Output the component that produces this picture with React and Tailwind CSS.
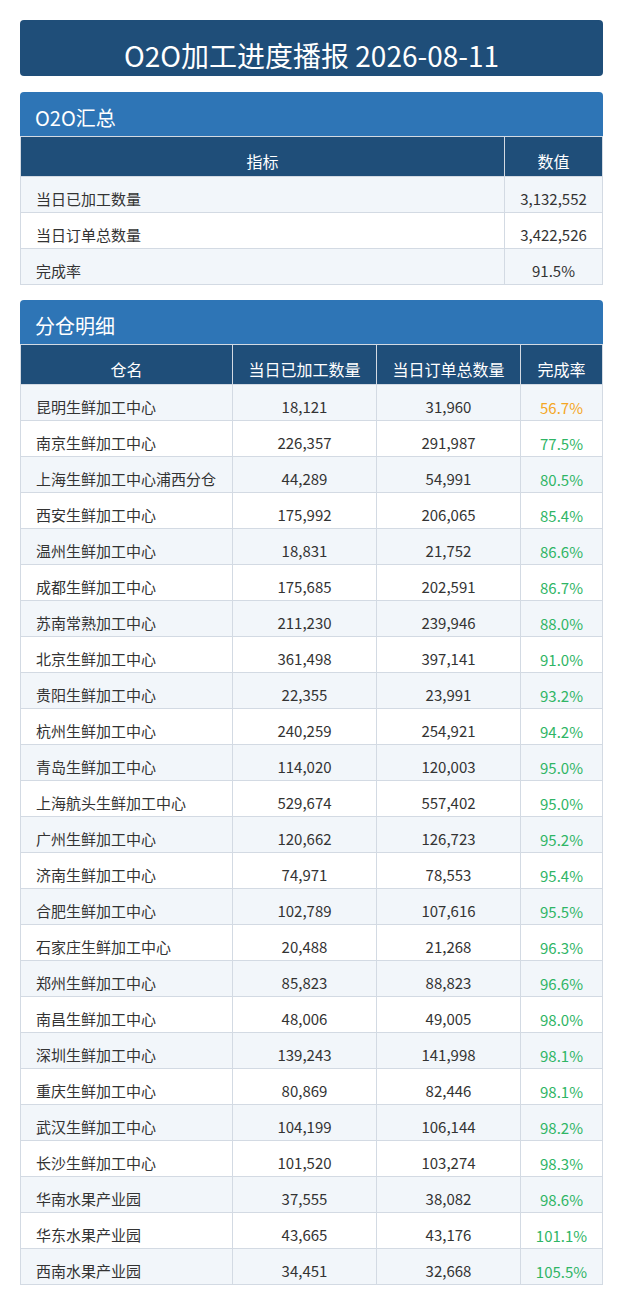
import React from "react";

const summary = [
  { label: "当日已加工数量", value: "3,132,552" },
  { label: "当日订单总数量", value: "3,422,526" },
  { label: "完成率", value: "91.5%" },
];

const rows = [
  ["昆明生鲜加工中心", "18,121", "31,960", "56.7%"],
  ["南京生鲜加工中心", "226,357", "291,987", "77.5%"],
  ["上海生鲜加工中心浦西分仓", "44,289", "54,991", "80.5%"],
  ["西安生鲜加工中心", "175,992", "206,065", "85.4%"],
  ["温州生鲜加工中心", "18,831", "21,752", "86.6%"],
  ["成都生鲜加工中心", "175,685", "202,591", "86.7%"],
  ["苏南常熟加工中心", "211,230", "239,946", "88.0%"],
  ["北京生鲜加工中心", "361,498", "397,141", "91.0%"],
  ["贵阳生鲜加工中心", "22,355", "23,991", "93.2%"],
  ["杭州生鲜加工中心", "240,259", "254,921", "94.2%"],
  ["青岛生鲜加工中心", "114,020", "120,003", "95.0%"],
  ["上海航头生鲜加工中心", "529,674", "557,402", "95.0%"],
  ["广州生鲜加工中心", "120,662", "126,723", "95.2%"],
  ["济南生鲜加工中心", "74,971", "78,553", "95.4%"],
  ["合肥生鲜加工中心", "102,789", "107,616", "95.5%"],
  ["石家庄生鲜加工中心", "20,488", "21,268", "96.3%"],
  ["郑州生鲜加工中心", "85,823", "88,823", "96.6%"],
  ["南昌生鲜加工中心", "48,006", "49,005", "98.0%"],
  ["深圳生鲜加工中心", "139,243", "141,998", "98.1%"],
  ["重庆生鲜加工中心", "80,869", "82,446", "98.1%"],
  ["武汉生鲜加工中心", "104,199", "106,144", "98.2%"],
  ["长沙生鲜加工中心", "101,520", "103,274", "98.3%"],
  ["华南水果产业园", "37,555", "38,082", "98.6%"],
  ["华东水果产业园", "43,665", "43,176", "101.1%"],
  ["西南水果产业园", "34,451", "32,668", "105.5%"],
];

const th =
  "h-[40px] border border-[#d3dae3] bg-[#1f4e79] pt-[8px] text-center text-[16px] font-normal text-white";
const td = "border border-[#d3dae3] pt-[10px] text-[15px]";

const SectionHead = ({ title }) => (
  <div className="h-[44px] rounded-t-[4px] bg-[#2e75b6] px-[15px] pt-[12px] text-[20px] leading-[28px] text-white">
    {title}
  </div>
);

export default function App() {
  return (
    <div className="min-h-[1304px] bg-white px-[20px] pt-[20px] pb-[20px] font-['Noto_Sans_CJK_SC','Noto_Sans',sans-serif] text-[#333333]">
      <div className="flex h-[56px] items-center justify-center rounded-[4px] bg-[#1f4e79] pt-[14px] text-[28px] leading-[36px] text-white">
        O2O加工进度播报 2026-08-11
      </div>

      {/* O2O汇总 */}
      <div className="mt-[16px]">
        <SectionHead title="O2O汇总" />
        <table className="w-full table-fixed border-collapse">
          <colgroup>
            <col className="w-[484px]" />
            <col />
          </colgroup>
          <thead>
            <tr>
              <th className={th}>指标</th>
              <th className={th}>数值</th>
            </tr>
          </thead>
          <tbody>
            {summary.map((r, i) => (
              <tr key={r.label} className={`h-[36px] ${i % 2 === 0 ? "bg-[#f2f6fa]" : "bg-white"}`}>
                <td className={`${td} pl-[15px] text-left text-[#333333]`}>{r.label}</td>
                <td className={`${td} text-center text-[#333333]`}>{r.value}</td>
              </tr>
            ))}
          </tbody>
        </table>
      </div>

      {/* 分仓明细 */}
      <div className="mt-[15px]">
        <SectionHead title="分仓明细" />
        <table className="w-full table-fixed border-collapse">
          <colgroup>
            <col className="w-[212px]" />
            <col className="w-[144px]" />
            <col className="w-[144px]" />
            <col />
          </colgroup>
          <thead>
            <tr>
              <th className={th}>仓名</th>
              <th className={th}>当日已加工数量</th>
              <th className={th}>当日订单总数量</th>
              <th className={th}>完成率</th>
            </tr>
          </thead>
          <tbody>
            {rows.map(([name, done, total, rate], i) => (
              <tr key={name} className={`h-[36px] ${i % 2 === 0 ? "bg-[#f2f6fa]" : "bg-white"}`}>
                <td className={`${td} pl-[15px] text-left text-[#333333]`}>{name}</td>
                <td className={`${td} text-center text-[#333333]`}>{done}</td>
                <td className={`${td} text-center text-[#333333]`}>{total}</td>
                <td
                  className={`${td} pt-[12px] text-center ${
                    parseFloat(rate) < 60 ? "text-[#f5a623]" : "text-[#2fb565]"
                  }`}
                >
                  {rate}
                </td>
              </tr>
            ))}
          </tbody>
        </table>
      </div>
    </div>
  );
}
